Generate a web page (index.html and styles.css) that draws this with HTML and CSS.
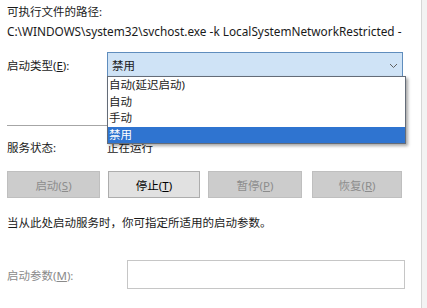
FILE: index.html
```html
<!DOCTYPE html>
<html lang="zh-CN">
<head>
  <meta charset="UTF-8" />
  <title>服务属性</title>
  <link rel="stylesheet" href="styles.css">
</head>
<body>
  <div class="dialog">
    <div class="text first">可执行文件的路径:</div>
    <div class="text path">C:\WINDOWS\system32\svchost.exe -k LocalSystemNetworkRestricted -</div>

    <div class="row type-row">
      <label class="row-label">启动类型(<u>E</u>):</label>
      <div class="combo">
        <span class="combo-value">禁用</span>
        <svg class="chevron" width="9" height="6" viewBox="0 0 9 6">
          <path d="M1 1 L4.5 4.5 L8 1" fill="none" stroke="#606060" stroke-width="1"/>
        </svg>
        <!-- open dropdown list -->
        <ul class="combo-list">
          <li>自动(延迟启动)</li>
          <li>自动</li>
          <li>手动</li>
          <li class="selected">禁用</li>
        </ul>
      </div>
    </div>

    <div class="separator"></div>

    <div class="row status-row">
      <span class="row-label">服务状态:</span>
      <span>正在运行</span>
    </div>

    <div class="buttons">
      <button class="btn" disabled>启动(<u>S</u>)</button>
      <button class="btn">停止(<u>T</u>)</button>
      <button class="btn" disabled>暂停(<u>P</u>)</button>
      <button class="btn" disabled>恢复(<u>R</u>)</button>
    </div>

    <div class="text hint">当从此处启动服务时，你可指定所适用的启动参数。</div>

    <div class="row param-row">
      <label class="row-label disabled">启动参数(<u>M</u>):</label>
      <input class="param-input" type="text" disabled />
    </div>
  </div>
</body>
</html>
```

FILE: styles.css
```css
body {
  margin: 0;
  background: #f3f3f3;
  font-family: "Noto Sans", "Noto Sans CJK SC", sans-serif;
  font-size: 11.5px;
  color: #1a1a1a;
}
.dialog {
  width: 422px;
  height: 308px;
  box-sizing: border-box;
  background: #fff;
  border-right: 1px solid #d6d6d6;
  padding: 4px 0 0 7px;
  overflow: hidden;
}
.text {
  line-height: 16px;
  white-space: nowrap;
}
.path {
  margin-top: 3px;
  font-size: 11.8px;
}
.row {
  display: flex;
  align-items: center;
}
.type-row {
  margin-top: 13px;
}
.row-label {
  width: 100px;
  flex: none;
}
.combo {
  position: relative;
  width: 296px;
  height: 25px;
  box-sizing: border-box;
  background: #cfe3f6;
  border: 1px solid #5f8dbd;
  display: flex;
  align-items: center;
  padding-left: 4px;
}
.chevron {
  position: absolute;
  right: 4px;
  top: 10px;
}
.combo-list {
  position: absolute;
  left: -1px;
  top: 23px;
  width: 297px;
  margin: 0;
  padding: 0;
  list-style: none;
  background: #fff;
  border: 1px solid #646c78;
  box-shadow: 2px 2px 3px rgba(0, 0, 0, 0.35);
  z-index: 2;
}
.combo-list li {
  height: 16.5px;
  line-height: 16.5px;
  padding-left: 1px;
}
.combo-list li.selected {
  background: #2f74d0;
  color: #fff;
}
.separator {
  margin-top: 48px;
  width: 396px;
  border-top: 1px solid #a6a6a6;
}
.status-row {
  margin-top: 14px;
  line-height: 16px;
}
.buttons {
  margin-top: 15px;
  display: grid;
  grid-template-columns: 93px 92px 94px 92px;
  column-gap: 8px;
  width: 397px;
}
.buttons .btn:nth-child(4) {
  margin-left: 2px;
}
.btn {
  height: 27px;
  font: inherit;
  color: #000;
  background: #e1e1e1;
  border: 1px solid #adadad;
  padding: 0;
}
.btn:disabled {
  color: #8c8c8c;
  background: #cccccc;
  border-color: #bfbfbf;
}
.hint {
  margin-top: 17px;
}
.param-row {
  margin-top: 29px;
}
.param-row .row-label {
  width: 120px;
}
.disabled {
  color: #8a8a8a;
}
.param-input {
  width: 278px;
  height: 29px;
  box-sizing: border-box;
  border: 1px solid #c6c6c6;
  background: #fff;
  margin: 0;
}
```
